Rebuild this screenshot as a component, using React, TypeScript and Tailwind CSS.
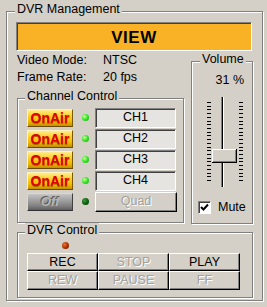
import React from "react";

const raised =
  "border border-t-white border-l-white border-r-black border-b-black shadow-[inset_-1px_-1px_0_#808080]";
const sunken =
  "border border-t-[#808080] border-l-[#808080] border-r-white border-b-white shadow-[inset_1px_1px_0_#404040]";
const disabledText = "text-[#a4a09a] [text-shadow:1px_1px_0_#fff]";

function GroupBox({
  title,
  className,
  titleLeft = "left-[7px]",
  children,
}: {
  title: string;
  className?: string;
  titleLeft?: string;
  children?: React.ReactNode;
}) {
  return (
    <div
      className={`relative border border-[#808080] shadow-[inset_1px_1px_0_#fff,1px_1px_0_#fff] ${className ?? ""}`}
    >
      {/* title sits over the etched line */}
      <span className={`absolute top-[-10px] ${titleLeft} bg-[#d4d0c8] px-[2px] leading-[15px]`}>
        {title}
      </span>
      {children}
    </div>
  );
}

function Led({ on, color = "green" }: { on?: boolean; color?: "green" | "red" }) {
  const bg =
    color === "red"
      ? "bg-[radial-gradient(circle_at_35%_35%,#e8743a,#a83000_55%,#5a1200)]"
      : on
        ? "bg-[radial-gradient(circle_at_35%_35%,#c8ff9a,#3ee82a_45%,#12a012)]"
        : "bg-[radial-gradient(circle_at_35%_35%,#3c9a3c,#0b5e0b_55%,#033003)]";
  return <div className={`w-[7px] h-[7px] rounded-full ${bg}`} />;
}

function AirButton({ on }: { on: boolean }) {
  if (on) {
    return (
      <div className="w-[46px] h-[18px] flex items-center justify-center border border-t-[#fff4b8] border-l-[#fff4b8] border-r-[#7a5a00] border-b-[#6a4a00] bg-[linear-gradient(180deg,#ffeb8c_0%,#fcd22e_35%,#f2ba06_70%,#c48e00_100%)] text-[14px] font-bold leading-none text-[#e00000] [text-shadow:0_1px_0_#a86a00]">
        OnAir
      </div>
    );
  }
  return (
    <div className="w-[46px] h-[18px] flex items-center justify-center border border-t-[#d8d8d8] border-l-[#d8d8d8] border-r-[#404040] border-b-[#303030] bg-[linear-gradient(180deg,#c4c4c4_0%,#9c9c9c_45%,#808080_75%,#5e5e5e_100%)] text-[13px] font-bold italic leading-none text-[#b4b4b4] [text-shadow:-1px_-1px_0_#5c5c5c]">
      Off
    </div>
  );
}

function Slider() {
  const ticks = Array.from({ length: 22 }, (_, i) => 7 + (i * 78) / 21);
  return (
    <svg width="60" height="94" viewBox="0 0 60 94" className="block">
      {ticks.map((y, i) => (
        <g key={i}>
          <rect x="15" y={Math.round(y)} width="4" height="1" fill="#000" />
          <rect x="47" y={Math.round(y)} width="4" height="1" fill="#000" />
        </g>
      ))}
      <rect x="29" y="2" width="1" height="90" fill="#808080" />
      <rect x="30" y="2" width="1" height="90" fill="#000" />
      <rect x="31" y="2" width="1" height="90" fill="#fff" />
      {/* thumb */}
      <rect x="20" y="54" width="25" height="14" fill="#000" />
      <rect x="20" y="54" width="24" height="13" fill="#fff" />
      <rect x="21" y="55" width="23" height="12" fill="#808080" />
      <rect x="21" y="55" width="22" height="11" fill="#d4d0c8" />
    </svg>
  );
}

export default function App() {
  const channels = [
    { air: true, label: "CH1" },
    { air: true, label: "CH2" },
    { air: true, label: "CH3" },
    { air: true, label: "CH4" },
  ];

  return (
    <div className="w-[267px] h-[307px] bg-[#d4d0c8] pt-[11px] pl-[6px] font-['Liberation_Sans',Arial,sans-serif] text-[12.5px] text-black">
      <GroupBox title="DVR Management" titleLeft="left-[8px]" className="w-[257px] h-[290px]">
        <div className="pt-[10px] pl-[10px]">
          <div
            className={`-ml-px w-[236px] h-[29px] ${sunken} bg-[#f9b226] flex items-center justify-center pt-[2px] text-[17px] font-bold tracking-[0.5px]`}
          >
            VIEW
          </div>

          <div className="flex items-start">
            {/* left column */}
            <div className="w-[167px]">
              <div className="mt-[1px] grid grid-cols-[86px_auto] leading-[17px]">
                <span>Video Mode:</span>
                <span>NTSC</span>
                <span>Frame Rate:</span>
                <span>20 fps</span>
              </div>

              <GroupBox title="Channel Control" className="mt-[12px] h-[125px]">
                <div className="pt-[8px] pl-[9px] flex flex-col">
                  {channels.map((c) => (
                    <div key={c.label} className="h-[21px] flex items-center">
                      <AirButton on={c.air} />
                      <div className="ml-[9px]">
                        <Led on />
                      </div>
                      <div
                        className={`ml-[6px] w-[81px] h-[20px] ${sunken} bg-[#e6e4e0] flex items-center justify-center`}
                      >
                        {c.label}
                      </div>
                    </div>
                  ))}
                  <div className="h-[21px] flex items-center">
                    <AirButton on={false} />
                    <div className="ml-[9px]">
                      <Led />
                    </div>
                    <div
                      className={`ml-[6px] w-[82px] h-[20px] ${raised} flex items-center justify-center ${disabledText}`}
                    >
                      Quad
                    </div>
                  </div>
                </div>
              </GroupBox>
            </div>

            {/* volume */}
            <GroupBox title="Volume" titleLeft="left-[8px]" className="ml-[7px] mt-[10px] w-[62px] h-[163px]">
              <div className="mt-[10px] pr-[8px] text-right leading-[16px]">31 %</div>
              <div className="mt-[7px]">
                <Slider />
              </div>
              <div className="mt-[12px] pl-[6px] flex items-center">
                <div className={`w-[13px] h-[13px] ${sunken} bg-white flex items-center justify-center`}>
                  <svg width="9" height="9" viewBox="0 0 9 9">
                    <path d="M1 4 L3.5 6.5 L8 1.5" fill="none" stroke="#000" strokeWidth="2" />
                  </svg>
                </div>
                <span className="ml-[7px] leading-[13px]">Mute</span>
              </div>
            </GroupBox>
          </div>

          <GroupBox title="DVR Control" className="mt-[8px] w-[236px] h-[66px]">
            <div className="mt-[9px] ml-[44px]">
              <Led color="red" />
            </div>
            <div className="mt-[4px] ml-[9px] w-[213px] grid grid-cols-3 grid-rows-[18px_19px]">
              <div className={`${raised} flex items-center justify-center`}>REC</div>
              <div className={`${raised} flex items-center justify-center ${disabledText}`}>STOP</div>
              <div className={`${raised} flex items-center justify-center`}>PLAY</div>
              <div className={`${raised} flex items-center justify-center ${disabledText}`}>REW</div>
              <div className={`${raised} flex items-center justify-center ${disabledText}`}>PAUSE</div>
              <div className={`${raised} flex items-center justify-center ${disabledText}`}>FF</div>
            </div>
          </GroupBox>
        </div>
      </GroupBox>
    </div>
  );
}
